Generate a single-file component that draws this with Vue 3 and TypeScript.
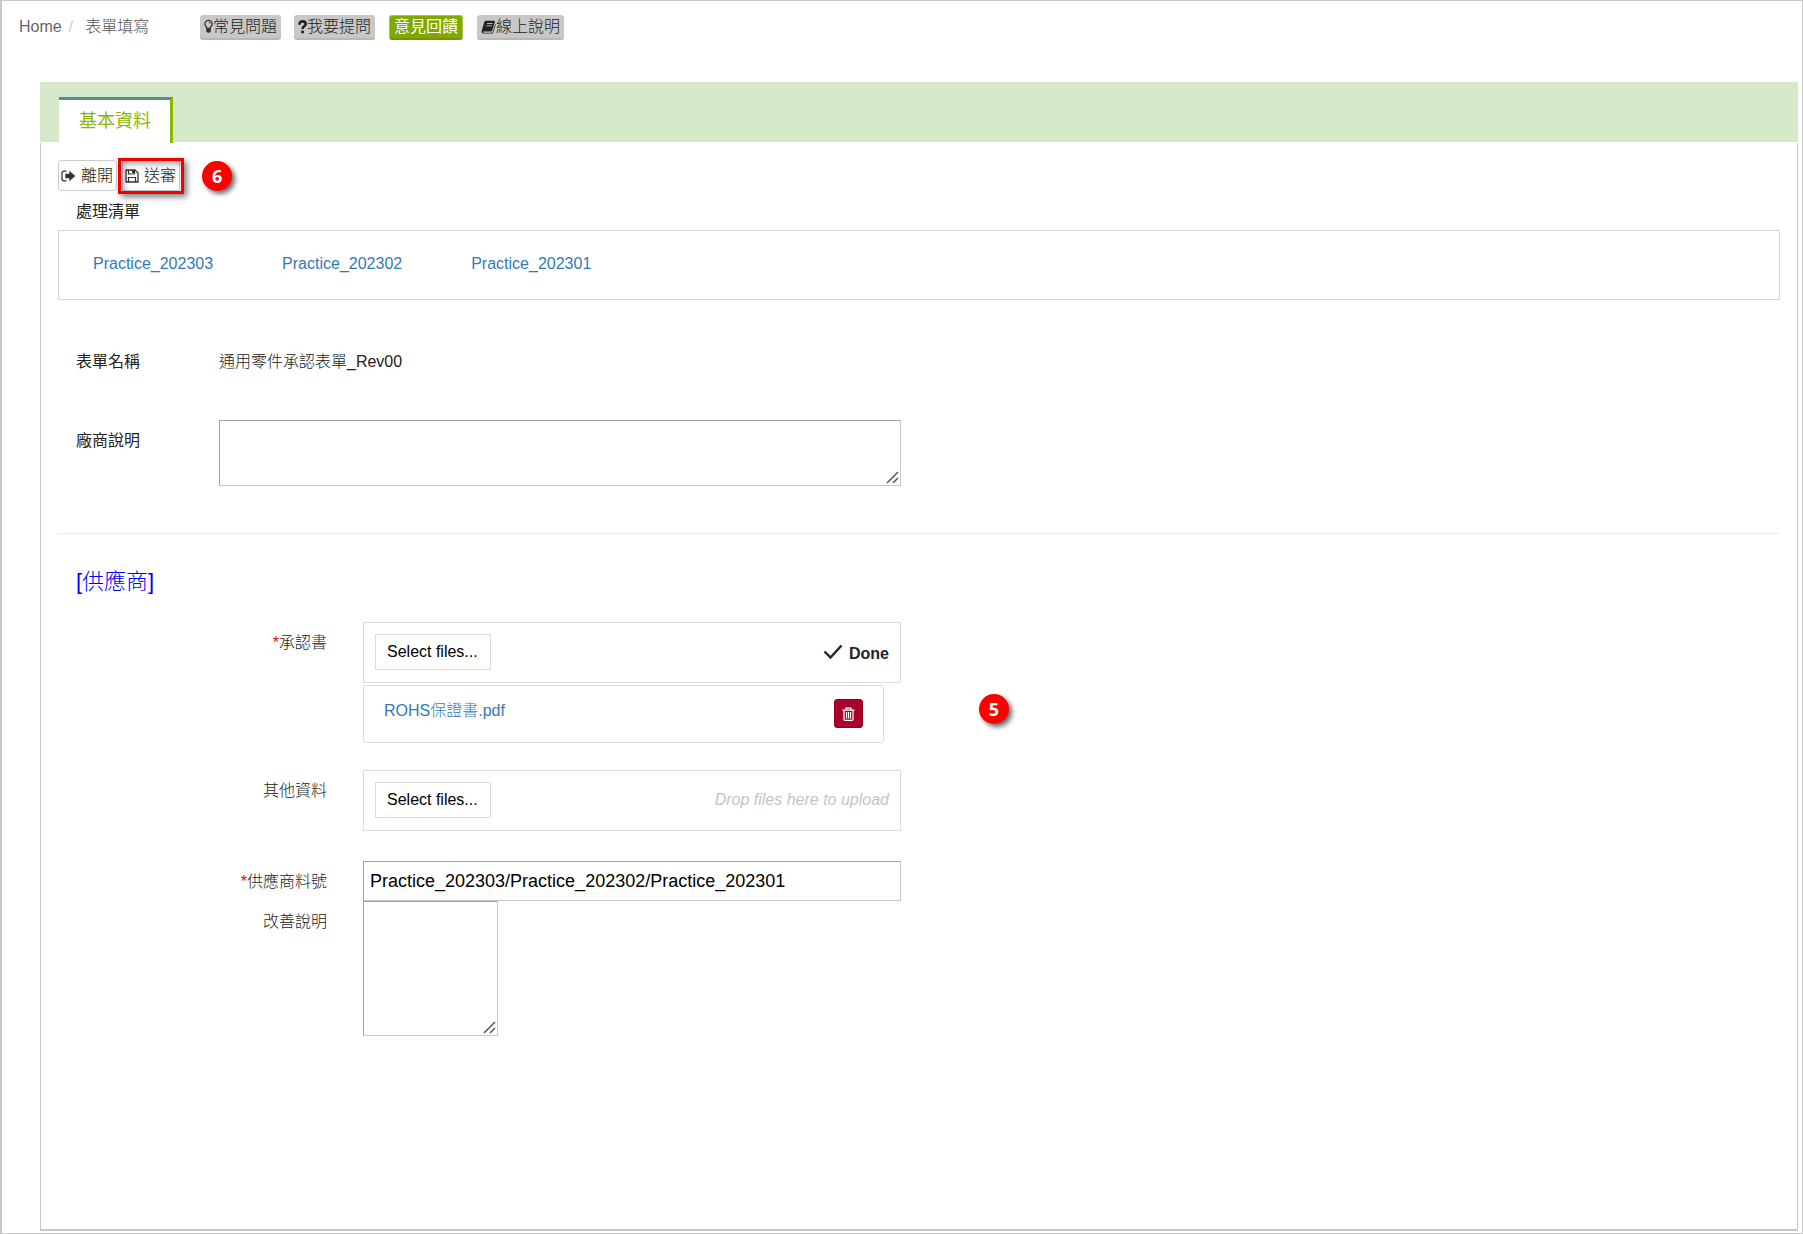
<script setup lang="ts">
import { ref } from 'vue'

const parts = ['Practice_202303', 'Practice_202302', 'Practice_202301']
const vendorNote = ref('')
const partNumber = ref(parts.join('/'))
const improvement = ref('')
</script>

<template>
  <div class="page">
    <header class="topbar">
      <nav class="crumbs" aria-label="breadcrumb">
        <a href="#">Home</a>
        <span class="sep">/</span>
        <span>表單填寫</span>
      </nav>
      <div class="help">
        <button type="button" class="chip">
          <svg width="9" height="15" viewBox="0 0 10 15" aria-hidden="true">
            <path d="M3.200 9.500C3.200 7.800 1 7 1 4.700a4 4 0 0 1 8 0C9 7 6.800 7.800 6.800 9.500z" fill="none" stroke="#333" stroke-width="1.400" />
            <path d="M5 2.600a2 2 0 0 1 2 2" fill="none" stroke="#333" stroke-width="0.900" />
            <path d="M2.500 9.200h5v3.600L6 14.500H4l-1.500-1.700z" fill="#333" />
          </svg>常見問題
        </button>
        <button type="button" class="chip">
          <svg width="9" height="14" viewBox="0 0 9 14" aria-hidden="true">
            <path d="M1.400 4.700C1.400 2.300 2.800 1.400 4.500 1.400s3.200 1 3.200 2.600c0 2.400-3.200 2.100-3.200 5" fill="none" stroke="#222" stroke-width="2.600" />
            <rect x="3.200" y="10.600" width="2.700" height="2.700" fill="#222" />
          </svg>我要提問
        </button>
        <button type="button" class="chip green">意見回饋</button>
        <button type="button" class="chip">
          <svg width="15" height="14" viewBox="0 0 15 14" aria-hidden="true">
            <path d="M5 .8h8.200q1 0 .7 1L11.200 10.500q-.3 1-1.200 1H3q-1 0-1 .6t1 .6h7.800q.6 0 .9-.9L14.300 3.500l.5.600-2.500 8.400q-.3 1.100-1.500 1.100H2.500Q.3 13.500.6 11L3.200 2.300Q3.700.8 5 .8z" fill="#222" />
            <path d="M6 3.500h5.500M5.300 5.800h5.500" stroke="#c8c8c8" stroke-width="0.900" />
          </svg>線上說明
        </button>
      </div>
    </header>

    <main class="panel">
      <div class="tabs" role="tablist">
        <button type="button" role="tab" aria-selected="true" class="tab">基本資料</button>
      </div>

      <div class="body">
        <div class="actions">
          <button type="button" class="act">
            <svg width="15" height="12" viewBox="0 0 15 12" aria-hidden="true">
              <path d="M5.500 1.200H3Q1 1.200 1 3v6q0 1.800 2 1.800h2.500" fill="none" stroke="#333" stroke-width="1.300" />
              <path d="M4.300 3.700h4V.700l6 5.300-6 5.300V8.300h-4z" fill="#333" />
            </svg>離開
          </button>
          <span class="marked">
            <button type="button" class="act">
              <svg width="14" height="14" viewBox="0 0 14 14" aria-hidden="true">
                <path d="M1 1h9l3 3v9H1z" fill="none" stroke="#333" stroke-width="1.300" stroke-linejoin="round" />
                <path d="M3.500 1v4h6V1M3.500 13V8.500h7V13" fill="none" stroke="#333" stroke-width="1.200" />
                <path d="M7 1h2v3H7z" fill="#333" />
              </svg>送審
            </button>
          </span>
          <span class="step">6</span>
        </div>

        <h2 class="list-title">處理清單</h2>
        <div class="parts">
          <a v-for="part in parts" :key="part" href="#">{{ part }}</a>
        </div>

        <div class="row form-name">
          <span class="label">表單名稱</span>
          <span>通用零件承認表單_Rev00</span>
        </div>
        <div class="row note">
          <label class="label" for="vendor-note">廠商說明</label>
          <textarea id="vendor-note" v-model="vendorNote"></textarea>
        </div>

        <hr />

        <h3 class="section">[供應商]</h3>

        <div class="field certificate">
          <label for="certificate"><i>*</i>承認書</label>
          <div>
            <div class="upload">
              <button id="certificate" type="button" class="pick">Select files...</button>
              <strong class="done">
                <svg width="20" height="16" viewBox="0 0 20 16" aria-hidden="true">
                  <path d="M1.500 7.500l6 6L18.500 1.500" fill="none" stroke="#212529" stroke-width="2.400" />
                </svg>
                <span>Done</span>
              </strong>
            </div>
            <div class="file">
              <a href="#">ROHS保證書.pdf</a>
              <button type="button" class="trash" aria-label="Delete">
                <svg width="13" height="14" viewBox="0 0 13 14" aria-hidden="true">
                  <path d="M.5 3.200h12M4 3V1.200h5V3M2 3.500v8.800q0 1 1 1h7q1 0 1-1V3.500M4.500 5v6.500M6.500 5v6.500M8.500 5v6.500" fill="none" stroke="#fff" stroke-width="1.200" />
                </svg>
              </button>
            </div>
          </div>
          <div class="side"><span class="step">5</span></div>
        </div>

        <div class="field other">
          <label for="other">其他資料</label>
          <div class="upload">
            <button id="other" type="button" class="pick">Select files...</button>
            <em>Drop files here to upload</em>
          </div>
        </div>

        <div class="field">
          <label for="part-number"><i>*</i>供應商料號</label>
          <input id="part-number" v-model="partNumber" type="text" />
        </div>

        <div class="field">
          <label for="improvement">改善說明</label>
          <textarea id="improvement" v-model="improvement" class="square"></textarea>
        </div>
      </div>
    </main>
  </div>
</template>

<style>
body {
  margin: 0;
  background: #fff;
}
</style>

<style scoped>
.page,
.page * {
  box-sizing: border-box;
}

.page {
  display: flex;
  flex-direction: column;
  min-height: 100vh;
  padding: 0 4px 2px 38px;
  border: 1px solid #c8c8c8;
  border-left-width: 2px;
  font: 300 16px/24px "Liberation Sans", "Noto Sans CJK TC", sans-serif;
  color: #222;
}

button,
input,
textarea {
  margin: 0;
  font: inherit;
  color: inherit;
}

a {
  color: #337ab7;
  text-decoration: none;
}

svg {
  flex: none;
}

.topbar {
  display: flex;
  height: 81px;
  padding-top: 14px;
  margin-left: -21px;
}

.crumbs {
  display: flex;
  width: 181px;
  color: #555;
}

.crumbs a {
  color: #666;
}

.sep {
  margin: 0 12px 0 7px;
  color: #ccc;
}

.help {
  display: flex;
  align-items: flex-start;
  gap: 13px;
}

.chip {
  display: flex;
  align-items: center;
  height: 25px;
  padding: 0 4px;
  border: 0;
  border-bottom: 2px solid #b8b8b8;
  border-radius: 3px;
  background: #c8c8c8;
  white-space: nowrap;
}

.chip.green {
  margin: 0 1px;
  border: 1px solid #a5bf50;
  border-bottom: 2px solid #739700;
  background: #80a800;
  font-weight: 400;
  color: #fff;
}

.panel {
  display: flex;
  flex: 1;
  flex-direction: column;
}

.tabs {
  height: 60px;
  padding: 15px 0 0 19px;
  background: #d5e8c8;
}

.tab {
  height: 46px;
  padding: 0 19px 2px 20px;
  border: 0;
  border-top: 3px solid #5a8a9c;
  border-right: 3px solid #8db600;
  background: #fff;
  font-size: 18px;
  font-weight: 400;
  color: #8db600;
}

.body {
  flex: 1;
  margin-top: 1px;
  padding: 17px 17px 0;
  border: 1px solid #c8c8c8;
  border-width: 0 1px 2px;
}

.actions {
  display: flex;
  align-items: center;
  height: 31px;
}

.act {
  display: flex;
  align-items: center;
  gap: 5px;
  height: 31px;
  padding: 0 3px 0 2px;
  border: 1px solid #ccc;
  border-radius: 3px;
  background: #fff;
  white-space: nowrap;
}

.marked {
  position: relative;
  margin: 0 22px 0 5px;
}

.marked::after {
  content: "";
  position: absolute;
  inset: -2px -4px -3px;
  border: 3px solid #f00000;
  box-shadow: 3px 3px 6px rgba(0, 0, 0, 0.5), inset 3px 3px 6px rgba(0, 0, 0, 0.35);
  pointer-events: none;
}

.step {
  width: 30px;
  height: 30px;
  border-radius: 50%;
  background: #f00;
  box-shadow: 3px 3px 5px rgba(0, 0, 0, 0.6);
  font: 700 18px/30px "Open Sans", sans-serif;
  text-align: center;
  color: #fff;
}

.list-title {
  margin: 9px 0 6px 18px;
  font-size: 16px;
  font-weight: 400;
}

.parts {
  display: flex;
  gap: 69px;
  height: 70px;
  padding: 21px 34px;
  border: 1px solid #d8d8d8;
}

.row {
  display: grid;
  grid-template-columns: 161fr 682fr 879fr;
}

.label {
  padding-left: 18px;
  font-weight: 400;
}

.form-name {
  margin-top: 50px;
}

.note {
  margin-top: 46px;
}

.note .label {
  padding-top: 9px;
}

textarea,
input {
  display: block;
  width: 100%;
  border: 1px solid #c8c8c8;
  border-top-color: #a0a0a0;
  border-left-color: #a0a0a0;
  border-radius: 0;
  background: #fff;
  color: #000;
  outline: 0;
}

textarea {
  height: 66px;
  resize: both;
}

textarea::-webkit-resizer {
  background: url("data:image/svg+xml,%3Csvg xmlns='http://www.w3.org/2000/svg' viewBox='0 0 15 15'%3E%3Cpath d='M2 13L13 2M8 13l5-5' stroke='%23555' stroke-width='1.500'/%3E%3C/svg%3E") center / 15px 15px no-repeat;
}

hr {
  margin: 47px 0 36px;
  border: 0;
  border-top: 1px solid #eee;
}

.section {
  height: 24px;
  margin: 0 0 28px 18px;
  font-size: 22px;
  font-weight: 300;
  color: #00f;
}

.field {
  display: grid;
  grid-template-columns: 305fr 538fr 879fr;
}

.field label {
  padding: 9px 36px 0 0;
  text-align: right;
}

.field i {
  font-style: normal;
  color: #f00;
}

.certificate {
  margin-bottom: 27px;
}

.other {
  margin-bottom: 30px;
}

.upload {
  display: flex;
  align-items: center;
  justify-content: space-between;
  height: 61px;
  padding: 0 11px 1px;
  border: 1px solid #dcdcdc;
}

.pick {
  height: 36px;
  padding: 0 12px 0 11px;
  border: 1px solid #dcdcdc;
  background: #fff;
  color: #000;
}

.upload em {
  color: #c4c4c4;
}

.done {
  display: flex;
  align-items: center;
  gap: 6px;
  font-weight: 700;
  color: #212529;
}

.done span {
  padding-top: 4px;
}

.file {
  display: flex;
  justify-content: space-between;
  height: 58px;
  margin: 2px 17px 0 0;
  padding: 13px 20px;
  border: 1px solid #dcdcdc;
  border-radius: 3px;
}

.trash {
  display: grid;
  place-items: center;
  width: 29px;
  height: 29px;
  padding: 0;
  border: 1px solid #8f0025;
  border-radius: 3px;
  background: #a90329;
}

.side {
  display: flex;
  align-items: center;
  padding: 52px 0 0 78px;
}

input {
  height: 40px;
  padding: 0 6px;
  font-size: 18px;
}

.square {
  width: 135px;
  height: 135px;
}
</style>
